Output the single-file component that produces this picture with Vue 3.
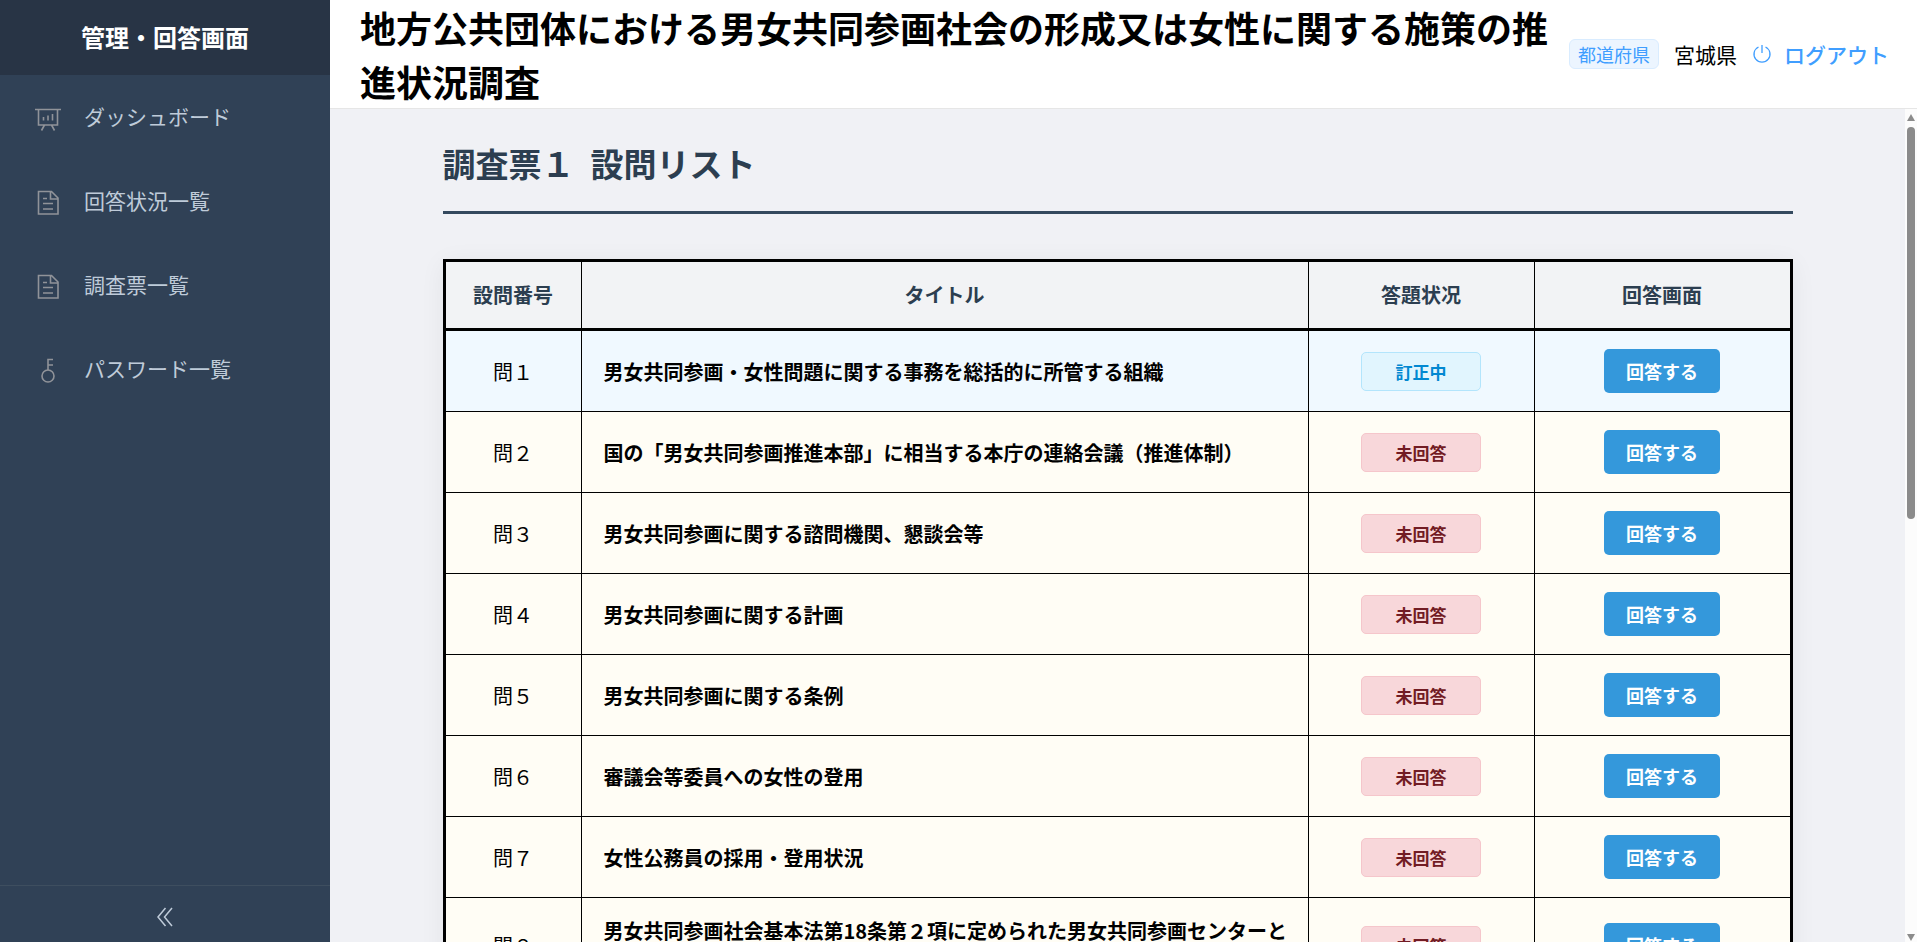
<script setup>
import { ref } from 'vue'

const menus = ref([
  { icon: 'board', label: 'ダッシュボード' },
  { icon: 'doc', label: '回答状況一覧' },
  { icon: 'doc', label: '調査票一覧' },
  { icon: 'key', label: 'パスワード一覧' },
])

const questions = ref([
  { no: '問１', title: '男女共同参画・女性問題に関する事務を総括的に所管する組織', status: 'editing' },
  { no: '問２', title: '国の「男女共同参画推進本部」に相当する本庁の連絡会議（推進体制）', status: 'none' },
  { no: '問３', title: '男女共同参画に関する諮問機関、懇談会等', status: 'none' },
  { no: '問４', title: '男女共同参画に関する計画', status: 'none' },
  { no: '問５', title: '男女共同参画に関する条例', status: 'none' },
  { no: '問６', title: '審議会等委員への女性の登用', status: 'none' },
  { no: '問７', title: '女性公務員の採用・登用状況', status: 'none' },
  { no: '問８', title: '男女共同参画社会基本法第18条第２項に定められた男女共同参画センターと\nしての施設', status: 'none' },
])

const status_text = { editing: '訂正中', none: '未回答' }
const collapsed = ref(false)
</script>

<template>
  <div class="layout">
    <aside class="sidebar" :class="{ collapsed }">
      <div class="logo">管理・回答画面</div>
      <nav>
        <a v-for="(m, idx) in menus" :key="idx" href="#" class="menu-item">
          <svg v-if="m.icon === 'board'" viewBox="0 0 28 28">
            <path d="M1 6.5H27M4.5 6.5V22H23.5V6.5M10.5 22L7.5 27.5M17.5 22L20.5 27.5M9.5 14V17.5M14 12.5V17.5M18.5 11V17.5" />
          </svg>
          <svg v-else-if="m.icon === 'doc'" viewBox="0 0 28 28">
            <path d="M4.5 4.5H17.5L24 11V27H4.5ZM16.5 4.5V12H24M9 11.5H13M9 16.5H19M9 22H19" />
          </svg>
          <svg v-else viewBox="0 0 28 28">
            <circle cx="14" cy="21" r="6" />
            <path d="M14 15V4.5H19M14 10H19" />
          </svg>
          <span>{{ m.label }}</span>
        </a>
      </nav>
      <button class="collapse" aria-label="メニュー開閉" @click="collapsed = !collapsed">
        <svg viewBox="0 0 18 20">
          <path d="M9.5 1L2 10L9.5 19M16 1L8.5 10L16 19" />
        </svg>
      </button>
    </aside>

    <div class="container">
      <header class="header">
        <h1>地方公共団体における男女共同参画社会の形成又は女性に関する施策の推進状況調査</h1>
        <div class="user">
          <span class="tag">都道府県</span>
          <span>宮城県</span>
          <a href="#" class="logout">
            <svg viewBox="0 0 20 20">
              <path d="M10 1V9M6.5 3A8 8 0 1 0 13.5 3" />
            </svg>
            <span>ログアウト</span>
          </a>
        </div>
      </header>

      <div class="body">
        <main class="main">
          <div class="content">
            <h2><span>調査票１</span><span>設問リスト</span></h2>
            <table>
              <thead>
                <tr>
                  <th class="col-no">設問番号</th>
                  <th>タイトル</th>
                  <th class="col-status">答題状况</th>
                  <th class="col-action">回答画面</th>
                </tr>
              </thead>
              <tbody>
                <tr v-for="q in questions" :key="q.no" :class="q.status">
                  <td>{{ q.no }}</td>
                  <td class="title">{{ q.title }}</td>
                  <td><span class="badge">{{ status_text[q.status] }}</span></td>
                  <td><button class="answer">回答する</button></td>
                </tr>
              </tbody>
            </table>
          </div>
        </main>
        <div class="scrollbar">
          <i class="up"></i>
          <div class="track"><div class="thumb"></div></div>
          <i class="down"></i>
        </div>
      </div>
    </div>
  </div>
</template>

<style>
body {
  margin: 0;
}
</style>

<style scoped>
.layout {
  display: flex;
  height: 100vh;
  overflow: hidden;
  font-family: "Noto Sans CJK JP", sans-serif;
  font-size: 21px;
  color: #000;
}

.sidebar {
  display: flex;
  flex-direction: column;
  flex: 0 0 330px;
  overflow: hidden;
  background: #304156;
}

.sidebar.collapsed {
  flex-basis: 96px;
}

.logo {
  padding-bottom: 2px;
  line-height: 73px;
  text-align: center;
  font-size: 24px;
  font-weight: bold;
  white-space: nowrap;
  color: #fff;
  background: #283445;
}

nav {
  flex: 1;
}

.menu-item {
  display: flex;
  align-items: center;
  gap: 22px;
  height: 84px;
  padding: 0 34px;
  color: #bfcbd9;
  text-decoration: none;
  white-space: nowrap;
}

.menu-item span {
  padding-bottom: 2px;
}

svg {
  flex: none;
  fill: none;
  stroke: currentColor;
}

.menu-item svg {
  width: 28px;
  height: 28px;
  stroke: #909399;
  stroke-width: 1.6;
}

.collapse {
  height: 57px;
  padding: 8px 0 0;
  border: 0;
  border-top: 1px solid #3e4e5f;
  background: none;
  color: #bfcbd9;
}

.collapse svg {
  width: 18px;
  height: 20px;
  stroke-width: 1.5;
}

.container {
  display: flex;
  flex-direction: column;
  flex: 1;
  min-width: 0;
}

.header {
  display: flex;
  align-items: center;
  justify-content: space-between;
  gap: 16px;
  padding: 0 28px 0 30px;
  border-bottom: 1px solid #e6e6e6;
  background: #fff;
}

h1 {
  margin: 0;
  font-size: 36px;
  line-height: 54px;
}

.user {
  display: flex;
  align-items: center;
  gap: 15px;
  white-space: nowrap;
}

.tag {
  padding: 0 8px;
  border: 1px solid #d9ecff;
  border-radius: 6px;
  background: #ecf5ff;
  color: #409eff;
  font-size: 18px;
  line-height: 28px;
}

.logout {
  display: flex;
  align-items: center;
  gap: 12px;
  color: #409eff;
  font-weight: 500;
  text-decoration: none;
}

.logout svg {
  width: 20px;
  height: 20px;
  stroke-width: 1.3;
}

.body {
  display: flex;
  flex: 1;
  min-height: 0;
  background: #f0f1f5;
}

.main {
  flex: 1;
  padding: 30px;
  overflow-y: scroll;
  scrollbar-width: none;
}

.content {
  max-width: 1350px;
  margin: 0 auto;
}

h2 {
  display: flex;
  gap: 16px;
  margin: 0 0 45px;
  padding-bottom: 24px;
  border-bottom: 3px solid #34495e;
  font-size: 33px;
  line-height: 48px;
  color: #2c3e50;
}

table {
  width: 100%;
  table-layout: fixed;
  border-collapse: collapse;
  border: 3px solid #000;
  box-shadow: 0 4px 24px rgba(0, 0, 0, 0.06);
  font-size: 20px;
  line-height: 29px;
}

th,
td {
  padding: 18px 16px;
  border: 1px solid #000;
  text-align: center;
}

thead {
  border-bottom: 3px solid #000;
}

th {
  padding-bottom: 19px;
  color: #2c3e50;
  background: #f2f3f5;
}

.col-no {
  width: 103px;
}

.col-status {
  width: 193px;
}

.col-action {
  width: 223px;
}

tbody td {
  height: 44px;
  background: #fffdf5;
}

tbody .editing td {
  background: #f0f9ff;
}

tbody .title {
  padding-left: 22px;
  text-align: left;
  font-weight: bold;
  white-space: pre-line;
}

.badge {
  display: inline-block;
  box-sizing: border-box;
  width: 120px;
  border: 1px solid #f5c6cb;
  border-radius: 5px;
  background: #f8d7da;
  color: #721c24;
  font-size: 17px;
  font-weight: bold;
  line-height: 37px;
  vertical-align: middle;
}

.editing .badge {
  border-color: #b3e5fc;
  background: #e1f5fe;
  color: #0288d1;
}

.answer {
  height: 44px;
  padding: 0 22px;
  border: 0;
  border-radius: 5px;
  background: #3498db;
  color: #fff;
  font-family: inherit;
  font-size: 18px;
  font-weight: bold;
  vertical-align: middle;
}

.scrollbar {
  display: flex;
  flex-direction: column;
  align-items: center;
  gap: 6px;
  flex: 0 0 12px;
  box-sizing: border-box;
  padding: 5px 0 1px;
  background: #fcfcfc;
}

.up,
.down {
  border: 4px solid transparent;
  border-top: 0;
  border-bottom: 7px solid #8b8b8b;
}

.down {
  transform: rotate(180deg);
}

.track {
  flex: 1;
}

.thumb {
  width: 8px;
  height: 49%;
  border-radius: 4px;
  background: #8b8b8b;
}
</style>
